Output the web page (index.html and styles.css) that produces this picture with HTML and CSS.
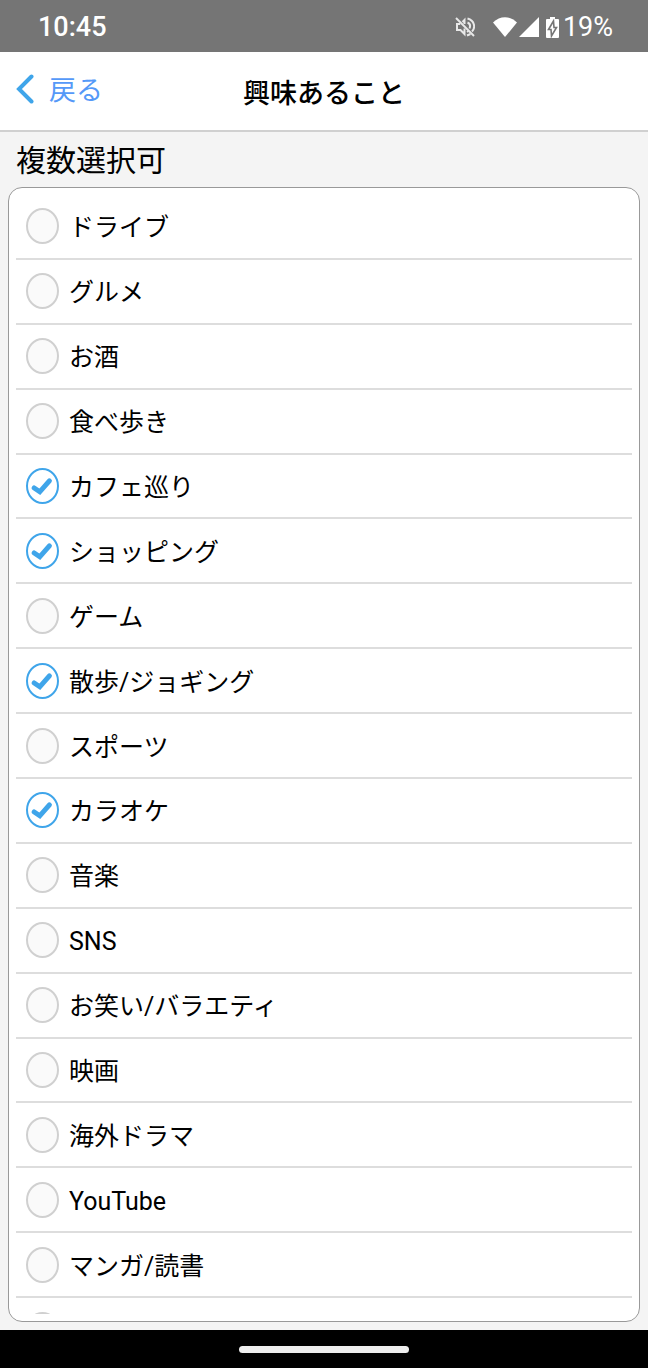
FILE: index.html
```
<!DOCTYPE html>
<html lang="ja">
<head>
    <meta charset="UTF-8">
    <meta name="viewport" content="width=device-width, initial-scale=1.0">
    <title>興味あること</title>
    <link rel="stylesheet" href="styles.css">
</head>
<body>

    <!-- Shared check mark -->
    <svg class="symbols" aria-hidden="true">
        <symbol id="check" viewBox="0 0 33 36">
            <path d="M8.200 20L13.800 23.800L23.400 12.800" fill="none" stroke="#3fa5ea" stroke-width="5" stroke-linecap="round" stroke-linejoin="miter"/>
        </symbol>
    </svg>

    <div class="status-bar">
        <span class="clock">10:45</span>
        <div class="status-icons">
            <svg class="mute-icon" viewBox="0 0 20 20" fill="none" stroke="#e8e8e8" stroke-width="2">
                <path d="M1 1L19 19"/>
                <path d="M5.200 7H2V13H5.500L9.500 17V11.500M7.500 5L9.500 3V7"/>
                <path d="M12.500 1.500C20 3.500 20.500 11 17 14.500M12.500 5.500C15 6.500 15.500 9 14.500 11.500M12 15L13.500 14M12 18.500L15.500 17"/>
            </svg>
            <svg class="wifi-icon" viewBox="0 0 24 20" fill="#fff">
                <path d="M12 20L0 5.500C7 -1.500 17 -1.500 24 5.500Z"/>
            </svg>
            <svg class="signal-icon" viewBox="0 0 20 20" fill="#fff">
                <path d="M20 0V20H0Z"/>
            </svg>
            <svg class="battery-icon" viewBox="0 0 13 21">
                <path d="M4 0H9V2H12Q13 2 13 3V20Q13 21 12 21H1Q0 21 0 20V3Q0 2 1 2H4Z" fill="#fff"/>
                <path d="M7.500 4L2.500 12.500H5L5.500 19L10.500 10.500H8Z" fill="#fff" stroke="#757575" stroke-width="1.600"/>
            </svg>
            <span class="battery-level">19%</span>
        </div>
    </div>

    <header class="header">
        <a class="back" href="#">
            <svg class="back-icon" viewBox="0 0 18 30" fill="none" stroke="#3fa5ea" stroke-width="4" stroke-linecap="round">
                <path d="M15.500 2.500L3 15L15.500 27.500"/>
            </svg>
            <span>戻る</span>
        </a>
        <h1 class="title">興味あること</h1>
    </header>

    <main class="content">
        <h2 class="hint">複数選択可</h2>
        <div class="panel">
            <ul class="options">
                <li class="option"><label><input type="checkbox"><svg><use href="#check"/></svg><span>ドライブ</span></label></li>
                <li class="option"><label><input type="checkbox"><svg><use href="#check"/></svg><span>グルメ</span></label></li>
                <li class="option"><label><input type="checkbox"><svg><use href="#check"/></svg><span>お酒</span></label></li>
                <li class="option"><label><input type="checkbox"><svg><use href="#check"/></svg><span>食べ歩き</span></label></li>
                <li class="option"><label><input type="checkbox" checked><svg><use href="#check"/></svg><span>カフェ巡り</span></label></li>
                <li class="option"><label><input type="checkbox" checked><svg><use href="#check"/></svg><span>ショッピング</span></label></li>
                <li class="option"><label><input type="checkbox"><svg><use href="#check"/></svg><span>ゲーム</span></label></li>
                <li class="option"><label><input type="checkbox" checked><svg><use href="#check"/></svg><span>散歩/ジョギング</span></label></li>
                <li class="option"><label><input type="checkbox"><svg><use href="#check"/></svg><span>スポーツ</span></label></li>
                <li class="option"><label><input type="checkbox" checked><svg><use href="#check"/></svg><span>カラオケ</span></label></li>
                <li class="option"><label><input type="checkbox"><svg><use href="#check"/></svg><span>音楽</span></label></li>
                <li class="option"><label><input type="checkbox"><svg><use href="#check"/></svg><span>SNS</span></label></li>
                <li class="option"><label><input type="checkbox"><svg><use href="#check"/></svg><span>お笑い/バラエティ</span></label></li>
                <li class="option"><label><input type="checkbox"><svg><use href="#check"/></svg><span>映画</span></label></li>
                <li class="option"><label><input type="checkbox"><svg><use href="#check"/></svg><span>海外ドラマ</span></label></li>
                <li class="option"><label><input type="checkbox"><svg><use href="#check"/></svg><span>YouTube</span></label></li>
                <li class="option"><label><input type="checkbox"><svg><use href="#check"/></svg><span>マンガ/読書</span></label></li>
                <li class="option"><label><input type="checkbox"><svg><use href="#check"/></svg><span></span></label></li>
            </ul>
        </div>
    </main>

    <div class="nav-bar">
        <div class="nav-handle"></div>
    </div>

</body>
</html>
```
FILE: styles.css
```
* {
    box-sizing: border-box;
}

body {
    display: flex;
    flex-direction: column;
    height: 100vh;
    margin: 0;
    font-family: Roboto, "Noto Sans CJK JP", sans-serif;
    color: #000;
    background-color: #f4f4f4;
}

.symbols {
    display: none;
}

/* Status bar */
.status-bar {
    display: flex;
    flex: none;
    align-items: center;
    justify-content: space-between;
    height: 52px;
    padding: 2px 35px 0 38px;
    background-color: #757575;
    color: #fff;
    font-size: 27px;
    font-weight: 500;
}

.status-icons {
    display: flex;
    align-items: center;
}

.mute-icon {
    width: 20px;
    height: 20px;
    margin-right: 18px;
}

.wifi-icon {
    width: 24px;
    height: 20px;
    margin-right: 2px;
}

.signal-icon {
    width: 20px;
    height: 20px;
    margin-right: 7px;
}

.battery-icon {
    width: 13px;
    height: 21px;
    margin-right: 4px;
}

.battery-level {
    font-weight: 400;
}

/* Header */
.header {
    display: grid;
    flex: none;
    grid-template-columns: 1fr auto 1fr;
    align-items: center;
    height: 80px;
    padding: 0 16px;
    border-bottom: 2px solid #d0d0d0;
    background-color: #fff;
}

.back {
    display: flex;
    align-items: center;
    gap: 15px;
    padding-bottom: 4px;
    color: #5599f8;
    font-size: 27px;
    line-height: 36px;
    text-decoration: none;
}

.back span {
    padding-top: 4px;
}

.back-icon {
    width: 18px;
    height: 30px;
}

.title {
    margin: 0;
    padding-top: 5px;
    font-size: 27px;
    font-weight: 500;
    line-height: 36px;
}

/* Content */
.content {
    display: flex;
    flex: 1;
    flex-direction: column;
    min-height: 0;
    padding: 0 8px 8px;
}

.hint {
    margin: 0;
    padding: 2px 8px 0;
    font-size: 30px;
    font-weight: 400;
    line-height: 53px;
}

.panel {
    display: flex;
    flex: 1;
    flex-direction: column;
    min-height: 0;
    padding: 7px;
    border: 1px solid #999;
    border-radius: 14px;
    background-color: #fff;
}

.options {
    display: flex;
    flex: 1;
    flex-direction: column;
    min-height: 0;
    margin: 0;
    padding: 0;
    overflow-y: auto;
    scrollbar-width: none;
    list-style: none;
}

.option {
    flex: 0 0 5.8%;
    border-bottom: 2px solid #ddd;
}

.option label {
    display: grid;
    grid-template-columns: 33px 1fr;
    column-gap: 10px;
    align-items: center;
    height: 100%;
    padding-left: 10px;
    font-size: 25px;
    line-height: 36px;
    cursor: pointer;
}

.option input {
    grid-area: 1 / 1;
    width: 33px;
    height: 36px;
    margin: 0;
    border: 2px solid #d0d0d0;
    border-radius: 50%;
    background-color: #fafafa;
    appearance: none;
}

.option input:checked {
    border-color: #3fa5ea;
    background-color: #fff;
}

.option svg {
    grid-area: 1 / 1;
    width: 33px;
    height: 36px;
    visibility: hidden;
    pointer-events: none;
}

.option input:checked + svg {
    visibility: visible;
}

.option span {
    grid-area: 1 / 2;
    padding-top: 4px;
}

/* Bottom navigation */
.nav-bar {
    display: flex;
    flex: none;
    align-items: center;
    justify-content: center;
    height: 38px;
    background-color: #000;
}

.nav-handle {
    width: 170px;
    height: 7px;
    border-radius: 4px;
    background-color: #eee;
}
```
